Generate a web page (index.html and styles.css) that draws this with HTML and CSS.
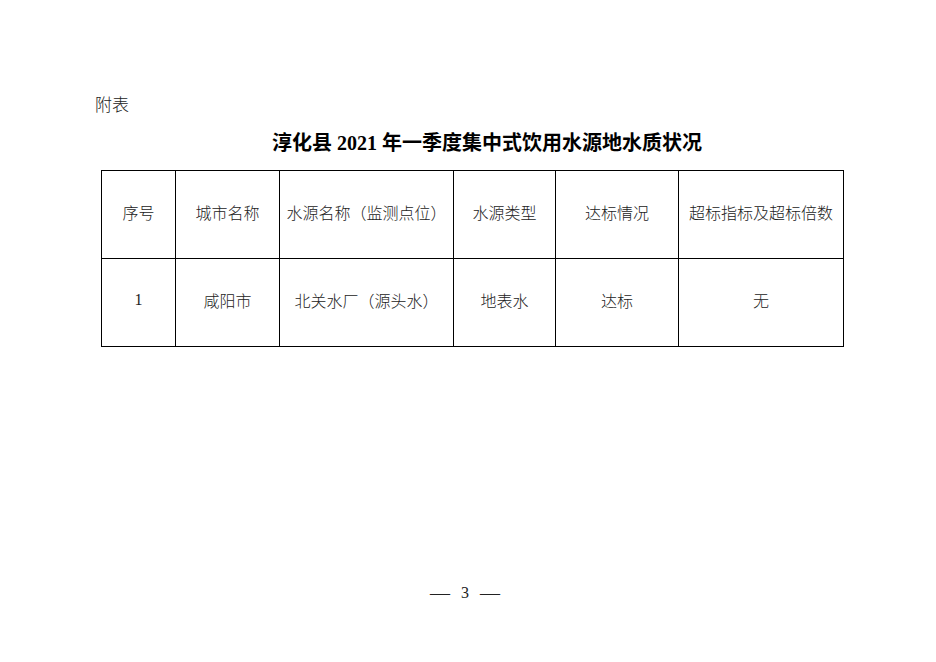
FILE: index.html
```html
<!DOCTYPE html>
<html lang="zh">
<head>
<meta charset="utf-8">
<link rel="stylesheet" href="styles.css">
</head>
<body>
<div class="page">
  <div class="label">附表</div>
  <h1 class="title">淳化县 2021 年一季度集中式饮用水源地水质状况</h1>
  <table class="grid">
    <colgroup>
      <col class="c1"><col class="c2"><col class="c3"><col class="c4"><col class="c5"><col class="c6">
    </colgroup>
    <tr>
      <td>序号</td>
      <td>城市名称</td>
      <td>水源名称（监测点位）</td>
      <td>水源类型</td>
      <td>达标情况</td>
      <td>超标指标及超标倍数</td>
    </tr>
    <tr>
      <td>1</td>
      <td>咸阳市</td>
      <td>北关水厂（源头水）</td>
      <td>地表水</td>
      <td>达标</td>
      <td>无</td>
    </tr>
  </table>
  <div class="footer"><span class="dash">—</span><span class="num">3</span><span class="dash">—</span></div>
</div>
</body>
</html>
```
FILE: styles.css
```css
html, body {
  margin: 0;
  padding: 0;
  background: #ffffff;
}
.page {
  width: 936px;
  height: 662px;
  padding-top: 94px;
  box-sizing: border-box;
  font-family: "Liberation Serif", "Noto Sans CJK SC", serif;
  color: #222222;
  position: relative;
}
.label {
  margin-left: 95px;
  font-size: 17px;
  line-height: 24px;
  font-weight: 300;
}
.title {
  margin: 11px 0 0 0;
  padding-left: 38px;
  text-align: center;
  font-size: 20px;
  line-height: 28px;
  font-weight: bold;
  color: #000000;
  width: 936px;
  box-sizing: border-box;
}
.grid {
  margin: 13px 0 0 101px;
  border-collapse: collapse;
  width: 742px;
  table-layout: fixed;
  font-size: 16px;
  font-weight: 300;
}
.grid td {
  border: 1px solid #000000;
  height: 88px;
  padding: 0 0 5px 0;
  box-sizing: border-box;
  text-align: center;
  vertical-align: middle;
  white-space: nowrap;
}
.c1 { width: 74px; }
.c2 { width: 104px; }
.c3 { width: 174px; }
.c4 { width: 102px; }
.c5 { width: 123px; }
.c6 { width: 165px; }
.footer {
  position: absolute;
  left: 0;
  top: 582px;
  width: 936px;
  display: flex;
  justify-content: center;
  align-items: center;
  gap: 11px;
  font-size: 16px;
  line-height: 22px;
  padding-right: 6px;
  box-sizing: border-box;
}
.footer .dash {
  font-family: "Liberation Serif", serif;
  font-size: 20px;
}
```
